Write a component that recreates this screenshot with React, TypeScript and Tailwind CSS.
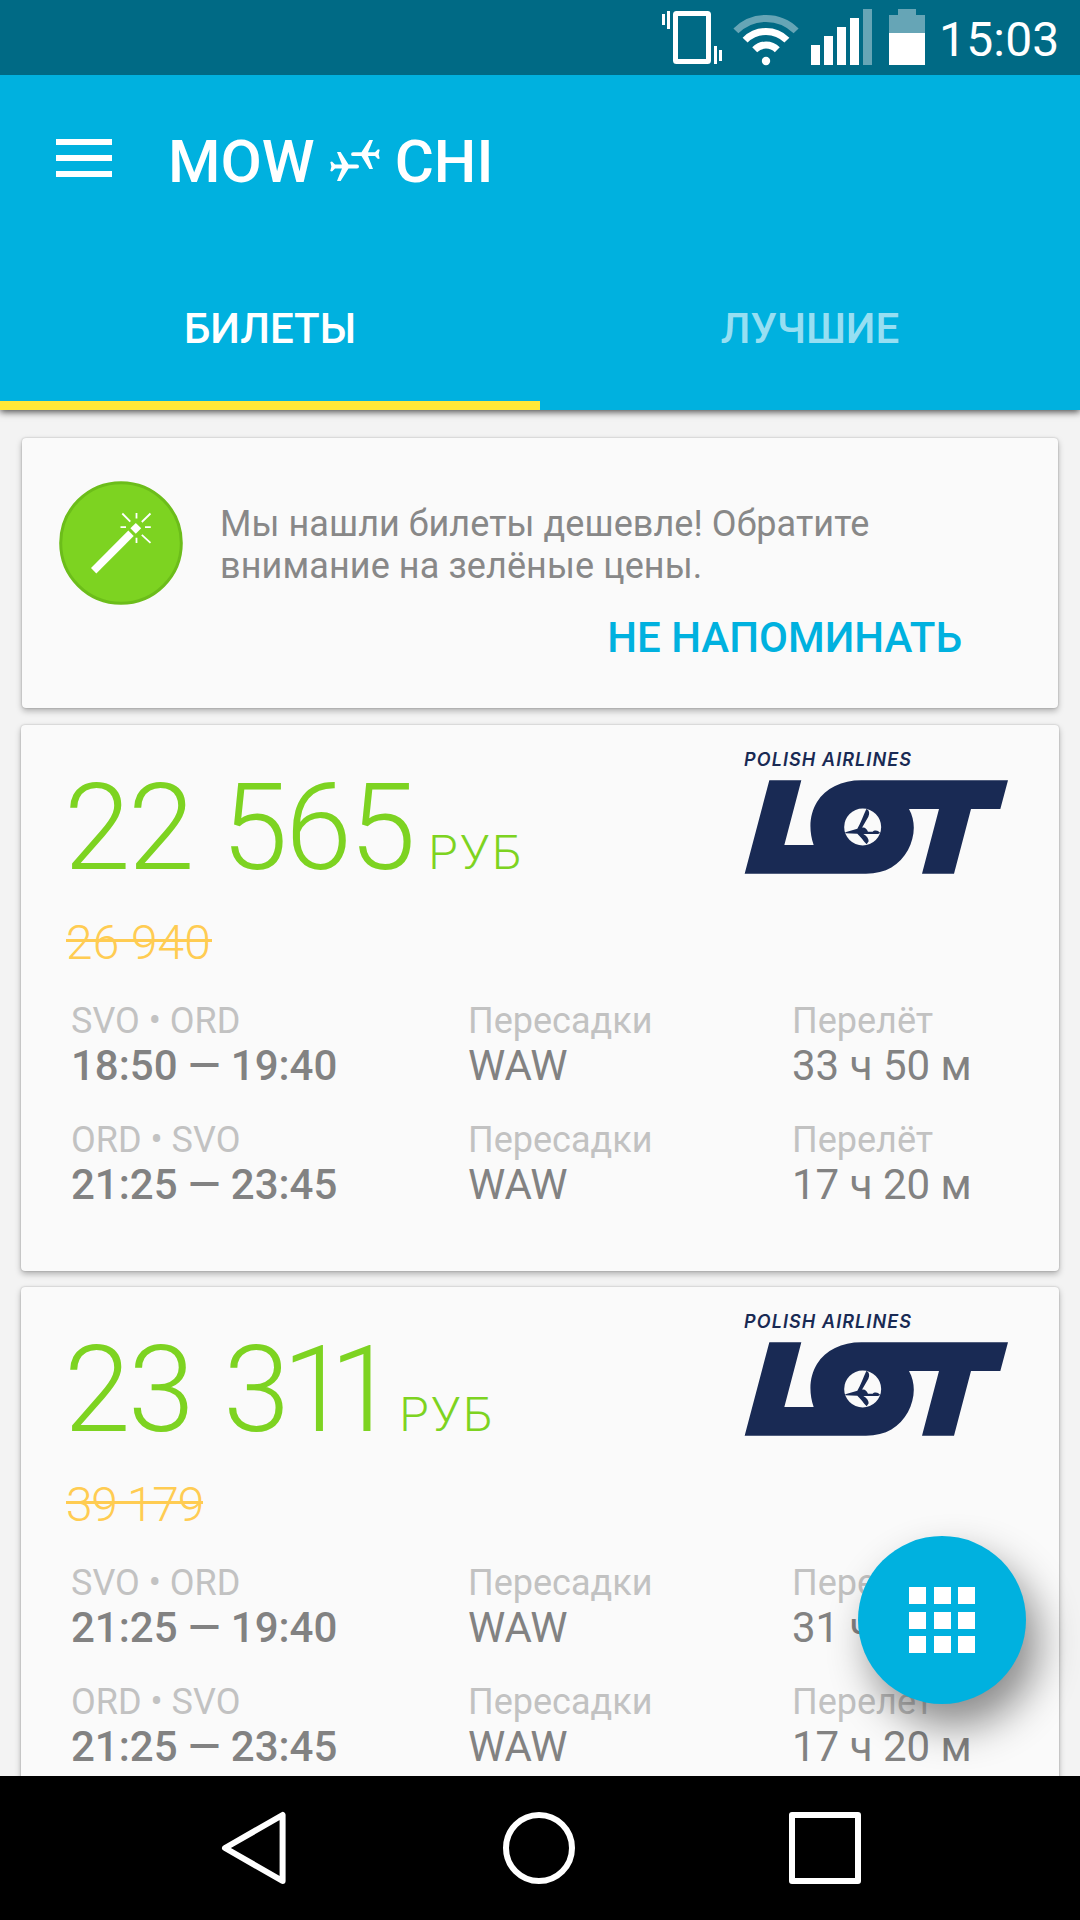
import React from "react";

type Leg = { route: string; time: string; stop: string; duration: string };
type Ticket = {
  price: string[];
  gapClass: string;
  unitClass: string;
  old: string;
  oldClass: string;
  legs: Leg[];
};

const tickets: Ticket[] = [
  {
    price: ["22", "565"],
    gapClass: "ml-[29px]",
    unitClass: "ml-[15px]",
    old: "26 940",
    oldClass: "w-[146px] tracking-[0px]",
    legs: [
      { route: "SVO • ORD", time: "18:50 — 19:40", stop: "WAW", duration: "33 ч 50 м" },
      { route: "ORD • SVO", time: "21:25 — 23:45", stop: "WAW", duration: "17 ч 20 м" },
    ],
  },
  {
    price: ["23", "311"],
    gapClass: "ml-[31px]",
    unitClass: "ml-[18px]",
    old: "39 179",
    oldClass: "w-[137px] tracking-[-1.3px]",
    legs: [
      { route: "SVO • ORD", time: "21:25 — 19:40", stop: "WAW", duration: "31 ч 15 м" },
      { route: "ORD • SVO", time: "21:25 — 23:45", stop: "WAW", duration: "17 ч 20 м" },
    ],
  },
];

function StatusBar() {
  return (
    <div className="relative z-20 flex h-[75px] shrink-0 items-start bg-[#006a85] pl-[662px] text-white">
      <svg className="mt-[11px] h-[54px] w-[60px] shrink-0" viewBox="662 11 60 54" fill="#fff">
        <rect x="662" y="14" width="3" height="11" />
        <rect x="667" y="11" width="3" height="18" />
        <rect x="675.5" y="13.5" width="33" height="48" rx="1" fill="none" stroke="#fff" strokeWidth="5" />
        <rect x="714" y="46" width="3" height="18" />
        <rect x="719" y="50" width="3" height="11" />
      </svg>
      <svg className="mt-[14px] ml-[11px] h-[52px] w-[66px] shrink-0" viewBox="733 14 66 52" fill="none" stroke="#fff">
        <path d="M735.9 30.9A42.5 42.5 0 0 1 796.1 30.9" strokeWidth="7" opacity="0.4" />
        <path d="M745.1 40.1A29.5 29.5 0 0 1 786.9 40.1" strokeWidth="7" />
        <path d="M754.7 49.7A16 16 0 0 1 777.3 49.7" strokeWidth="7" />
        <circle cx="766" cy="61" r="4.2" fill="#fff" stroke="none" />
      </svg>
      <svg className="mt-[9px] ml-[12px] h-[56px] w-[61px] shrink-0" viewBox="811 9 61 56" fill="#fff">
        <rect x="811" y="45" width="9" height="20" />
        <rect x="824" y="36" width="9" height="29" />
        <rect x="837" y="27" width="9" height="38" />
        <rect x="850" y="18" width="9" height="47" />
        <rect x="863" y="9" width="9" height="56" opacity="0.4" />
      </svg>
      <svg className="mt-[9px] ml-[17px] h-[56px] w-[36px] shrink-0" viewBox="889 9 36 56" fill="#fff">
        <path d="M898 9H916V15H925V33H889V15H898Z" opacity="0.4" />
        <rect x="889" y="33" width="36" height="32" />
      </svg>
      <span className="ml-[14px] text-[48px] leading-[79px] tracking-[0.2px] whitespace-nowrap">15:03</span>
    </div>
  );
}

function Planes() {
  return (
    <svg className="mt-[64px] ml-[15px] h-[43px] w-[50px]" viewBox="330 139 50 43" fill="#fff">
      <path
        transform="translate(330 151)"
        d="M0.3 11L2 10.6L5 13.6H12L7 1H10.6L18.5 13.6H27A1.9 1.9 0 0 1 27 17.6H18.5L10.6 30H7L12 17.6H5L2 20.5L0.3 20L1.4 15.6Z"
      />
      <path
        transform="rotate(180 365.5 154.5) translate(351 139.5)"
        d="M0.3 11L2 10.6L5 13.4H12L7 0.5H10.6L18.5 13.4H27A1.9 1.9 0 0 1 27 17.2H18.5L10.6 29.5H7L12 17.2H5L2 20.3L0.3 19.8L1.4 15.3Z"
      />
    </svg>
  );
}

function Header() {
  return (
    <header className="relative z-10 flex h-[335px] shrink-0 flex-col bg-[#00b1df] text-white shadow-[0_2px_7px_rgba(0,0,0,0.7)]">
      <div className="flex h-[173px] pl-[56px]">
        <div className="mt-[64px] flex w-[56px] flex-col gap-[10px]">
          <i className="h-[6px] bg-white" />
          <i className="h-[6px] bg-white" />
          <i className="h-[6px] bg-white" />
        </div>
        <h1 className="ml-[56px] flex text-[60px] leading-[173px] font-medium">
          <span>MOW</span>
          <Planes />
          <span className="ml-[15px]">CHI</span>
        </h1>
      </div>
      <nav className="grid grid-cols-2 grid-rows-[162px] text-center text-[42px] leading-[161px] font-medium">
        <div className="h-[162px] border-b-[9px] border-[#ffe838]">БИЛЕТЫ</div>
        <div className="h-[162px] text-white/60">ЛУЧШИЕ</div>
      </nav>
    </header>
  );
}

function WandBadge() {
  return (
    <svg className="h-[124px] w-[124px] shrink-0" viewBox="59 481 124 124">
      <circle cx="121" cy="543" r="60.3" fill="#7dd321" stroke="#6cbd1a" strokeWidth="3" />
      <g fill="#fff">
        <path d="M91 568L128.3 530.6L133.7 536L96.3 573.4Z" />
        <path d="M130.4 528.3L135.8 522.9L141.2 528.3L135.8 533.7Z" />
      </g>
      <path
        d="M136.5 513V518.5M136.5 537.7V543M120.5 527.2H126M145 527.2H150.8M122.3 513.5L130.3 521.7M150.5 513.5L141.8 522M141.8 534.8L150.5 542.8"
        stroke="#fff"
        strokeWidth="1.8"
        fill="none"
      />
    </svg>
  );
}

function Notice() {
  return (
    <section className="mx-[22px] mt-[28px] h-[270px] shrink-0 rounded-[4px] bg-[#fafafa] shadow-[0_3px_6px_rgba(0,0,0,0.28),0_0_2px_rgba(0,0,0,0.25)]">
      <div className="flex h-[178px] pt-[43px] pl-[37px]">
        <WandBadge />
        <p className="mt-[22px] ml-[37px] text-[36px] leading-[42px] tracking-[0.06px] whitespace-nowrap text-[#888888]">
          Мы нашли билеты дешевле! Обратите
          <br />
          <span className="tracking-[0.1px]">внимание на зелёные цены.</span>
        </p>
      </div>
      <button className="mr-[96px] ml-auto block text-[42px] leading-[44px] font-medium text-[#00b1df]">НЕ НАПОМИНАТЬ</button>
    </section>
  );
}

function LotLogo() {
  return (
    <div className="mt-[22px] ml-auto w-[265px] text-[#192a54]">
      <div className="font-['Inter','Roboto',sans-serif] text-[18px] leading-[26px] font-semibold whitespace-nowrap italic tracking-[1.1px]">
        POLISH AIRLINES
      </div>
      <svg className="mt-[7px] h-[94px] w-[265px]" viewBox="72 151 795 282">
        <path
          fill="#192a54"
          d="M148 152H244L193 346H281C265 300 269 253 291 217C317 176 365 152 424 152H864L841 238H753L702 432H606L657 238H567C589 278 584 322 564 361C539 406 498 432 438 432H74Z"
        />
        <circle cx="428" cy="292" r="55.5" fill="#fafafa" />
        <path
          fill="#192a54"
          d="M376 308L412 297C422 280 430 258 439 238C449 242 449 252 445 261L426 294C435 292 440 298 444 306H458C460 302 470 301 474 304L481 310L474 313H430C440 318 446 326 446 335L440 344C430 333 422 321 412 312L376 311Z"
        />
      </svg>
    </div>
  );
}

function digitClass(ch: string, index: number) {
  if (ch !== "1") return "tracking-[-2.5px]";
  return index === 1 ? "-ml-[5px] tracking-[-15px]" : "-ml-[4px] tracking-[-15px]";
}

function Price({ ticket }: { ticket: Ticket }) {
  return (
    <div className="flex h-[120px] items-baseline text-[#7dd321]">
      <span className="text-[120px] leading-[120px] font-light whitespace-nowrap">
        {ticket.price.map((part, p) => (
          <span key={p} className={p > 0 ? ticket.gapClass : ""}>
            {part.split("").map((ch, i) => (
              <span key={i} className={digitClass(ch, i)}>
                {ch}
              </span>
            ))}
          </span>
        ))}
      </span>
      <span className={`${ticket.unitClass} text-[48px] leading-[48px] font-light tracking-[2px]`}>РУБ</span>
    </div>
  );
}

function TicketCard({ ticket }: { ticket: Ticket }) {
  return (
    <section className="mx-[21px] h-[546px] shrink-0 rounded-[4px] bg-[#fafafa] shadow-[0_3px_6px_rgba(0,0,0,0.28),0_0_2px_rgba(0,0,0,0.25)]">
      <div className="flex h-[163px] pr-[50px] pl-[43px]">
        <div className="pt-[43px]">
          <Price ticket={ticket} />
        </div>
        <LotLogo />
      </div>
      <div className="mt-[31px] ml-[45px] flex h-[48px] text-[48px] leading-[48px] font-light text-[#ffcc52]">
        <del className={`${ticket.oldClass} relative whitespace-nowrap no-underline`}>
          {ticket.old}
          <i className="absolute top-[20px] left-0 h-[3px] w-full bg-[#ffcc52]" />
        </del>
      </div>
      <div className="mt-[33px] ml-[50px] flex flex-col gap-[29px] whitespace-nowrap">
        {ticket.legs.map((leg) => (
          <div key={leg.route} className="grid grid-cols-[397px_324px_1fr] text-[42px] leading-[48px] text-[#828282]">
            <div>
              <div className="text-[36px] leading-[42px] text-[#c2c2c2]">{leg.route}</div>
              <div className="font-medium">{leg.time}</div>
            </div>
            <div>
              <div className="text-[36px] leading-[42px] text-[#c2c2c2]">Пересадки</div>
              <div>{leg.stop}</div>
            </div>
            <div>
              <div className="text-[36px] leading-[42px] text-[#c2c2c2]">Перелёт</div>
              <div>{leg.duration}</div>
            </div>
          </div>
        ))}
      </div>
    </section>
  );
}

function NavBar() {
  return (
    <nav className="z-20 flex h-[144px] shrink-0 items-center bg-black pl-[221px]">
      <svg className="h-[74px] w-[66px]" viewBox="221 1811 66 74" fill="none" stroke="#fff" strokeWidth="6" strokeLinejoin="round">
        <path d="M282.6 1815V1881L225 1848Z" />
      </svg>
      <svg className="ml-[215px] h-[74px] w-[74px]" viewBox="0 0 74 74" fill="none" stroke="#fff" strokeWidth="6">
        <circle cx="37" cy="37" r="33" />
      </svg>
      <svg className="ml-[212px] h-[74px] w-[74px]" viewBox="0 0 74 74" fill="none" stroke="#fff" strokeWidth="6" strokeLinejoin="round">
        <rect x="4" y="4" width="66" height="66" />
      </svg>
    </nav>
  );
}

export default function App() {
  return (
    <div className="relative flex h-[1920px] w-[1080px] flex-col overflow-hidden bg-[#f3f3f3] font-['Roboto',sans-serif]">
      <StatusBar />
      <Header />
      <main className="flex min-h-0 grow flex-col overflow-hidden">
        <Notice />
        <div className="mt-[17px] flex flex-col gap-[16px]">
          {tickets.map((t) => (
            <TicketCard key={t.old} ticket={t} />
          ))}
        </div>
      </main>
      <button className="absolute top-[1536px] right-[54px] grid h-[168px] w-[168px] grid-cols-[repeat(3,17px)] grid-rows-[repeat(3,17px)] place-content-center gap-[7.5px] rounded-full bg-[#00b1df] shadow-[12px_22px_42px_rgba(0,0,0,0.45)]">
        {Array.from({ length: 9 }, (_, i) => (
          <i key={i} className="bg-white" />
        ))}
      </button>
      <NavBar />
    </div>
  );
}
